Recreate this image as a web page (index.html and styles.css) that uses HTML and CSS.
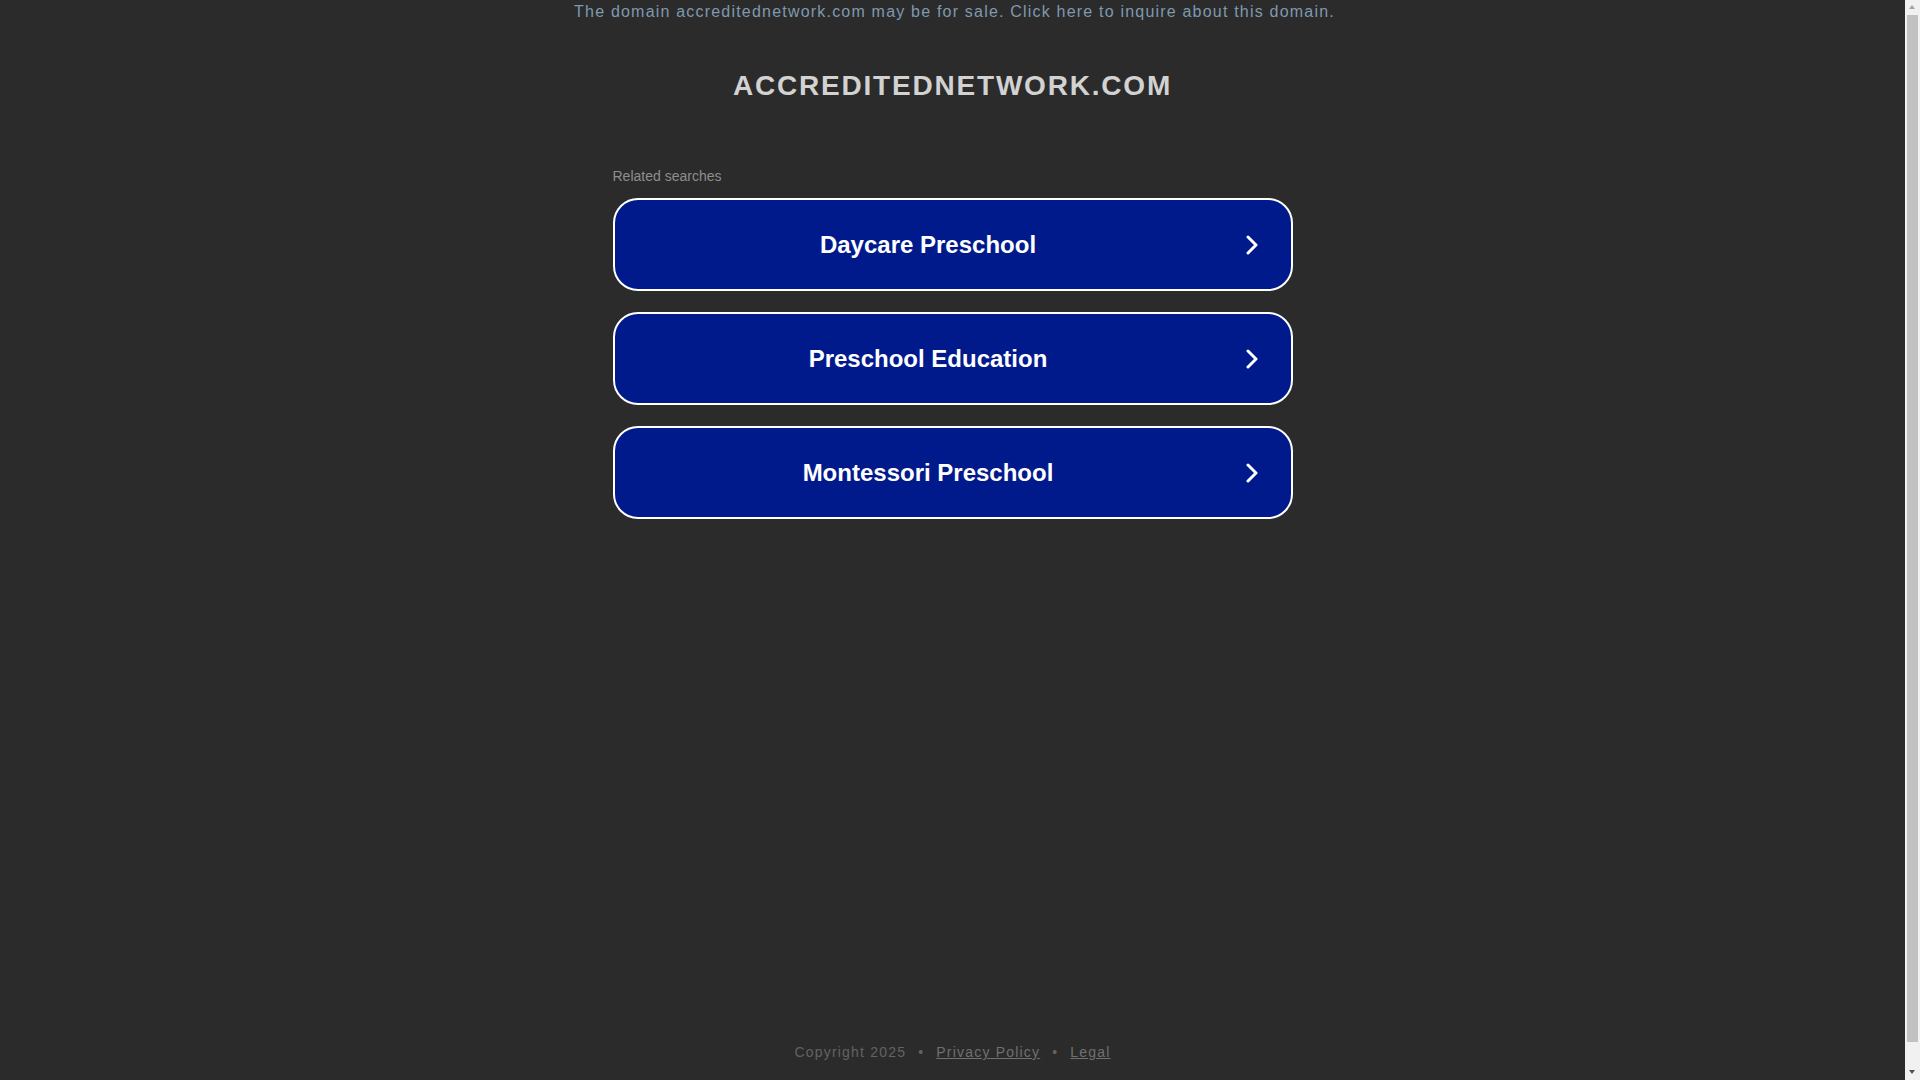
FILE: index.html
```html
<!DOCTYPE html>
<html lang="en">
<head>
<meta charset="utf-8">
<title>accreditednetwork.com</title>
<link rel="stylesheet" href="styles.css">
</head>
<body>
<div class="page">
  <div class="sale"><a href="#">The domain accreditednetwork.com may be for sale. Click here to inquire about this domain.</a></div>
  <h1 class="domain">ACCREDITEDNETWORK.COM</h1>
  <div class="searches">
    <div class="label">Related searches</div>
    <a class="btn" href="#"><span class="btn-text">Daycare Preschool</span><svg class="chev" viewBox="0 0 12 20" width="12" height="20"><path d="M2 2 L10 10 L2 18" fill="none" stroke="#fff" stroke-width="3" stroke-linecap="round" stroke-linejoin="round"/></svg></a>
    <a class="btn" href="#"><span class="btn-text">Preschool Education</span><svg class="chev" viewBox="0 0 12 20" width="12" height="20"><path d="M2 2 L10 10 L2 18" fill="none" stroke="#fff" stroke-width="3" stroke-linecap="round" stroke-linejoin="round"/></svg></a>
    <a class="btn" href="#"><span class="btn-text">Montessori Preschool</span><svg class="chev" viewBox="0 0 12 20" width="12" height="20"><path d="M2 2 L10 10 L2 18" fill="none" stroke="#fff" stroke-width="3" stroke-linecap="round" stroke-linejoin="round"/></svg></a>
  </div>
  <div class="footer">
    <span>Copyright 2025</span><span class="dot">•</span><a href="#">Privacy Policy</a><span class="dot">•</span><a href="#">Legal</a>
  </div>
</div>
<div class="scrollbar">
  <span class="sb-up"></span>
  <span class="sb-thumb"></span>
  <span class="sb-down"></span>
</div>
</body>
</html>
```

FILE: styles.css
```css
html, body {
  margin: 0;
  padding: 0;
  background: #2b2b2b;
  font-family: "Liberation Sans", Arial, sans-serif;
}
body {
  margin-right: 15px;
}
.page {
  min-height: calc(100vh + 25px);
  display: flex;
  flex-direction: column;
  align-items: center;
}
.sale {
  margin-top: 2px;
  font-size: 16px;
  line-height: 20px;
  letter-spacing: 1.2px;
  text-align: center;
  padding-left: 4px;
}
.sale a {
  color: #7f99b0;
  text-decoration: none;
}
.domain {
  margin: 48px 0 0;
  font-size: 28px;
  line-height: 32px;
  font-weight: bold;
  letter-spacing: 1.8px;
  color: #d2d2d2;
}
.searches {
  width: 680px;
  margin-top: 66px;
  display: flex;
  flex-direction: column;
}
.label {
  font-size: 14px;
  line-height: 16px;
  color: #8e8e8e;
  margin-bottom: 14px;
}
.btn {
  box-sizing: border-box;
  height: 93px;
  margin-bottom: 21px;
  background: #011a8b;
  border: 2px solid #fff;
  border-radius: 25px;
  display: flex;
  align-items: center;
  padding: 0 33px 0 20px;
  text-decoration: none;
}
.btn-text {
  flex: 1;
  text-align: center;
  color: #fff;
  font-size: 24px;
  font-weight: bold;
  margin-right: 24px;
}
.chev {
  flex: none;
  display: block;
}
.footer {
  margin-top: auto;
  padding-bottom: 43px;
  font-size: 14px;
  line-height: 20px;
  letter-spacing: 1.2px;
  color: #636363;
}
.footer a {
  color: #707070;
}
.dot {
  padding: 0 12px;
}
.scrollbar {
  position: fixed;
  top: 0;
  right: 0;
  width: 15px;
  height: 100vh;
  background: #f1f1f1;
}
.sb-up, .sb-down {
  position: absolute;
  left: 4px;
  width: 0;
  height: 0;
  border-left: 3.5px solid transparent;
  border-right: 3.5px solid transparent;
}
.sb-up {
  top: 5px;
  border-bottom: 4px solid #a3a3a3;
}
.sb-down {
  bottom: 6px;
  border-top: 4px solid #505050;
}
.sb-thumb {
  position: absolute;
  top: 15px;
  left: 2px;
  width: 11px;
  height: 1027px;
  background: #c1c1c1;
}
```
